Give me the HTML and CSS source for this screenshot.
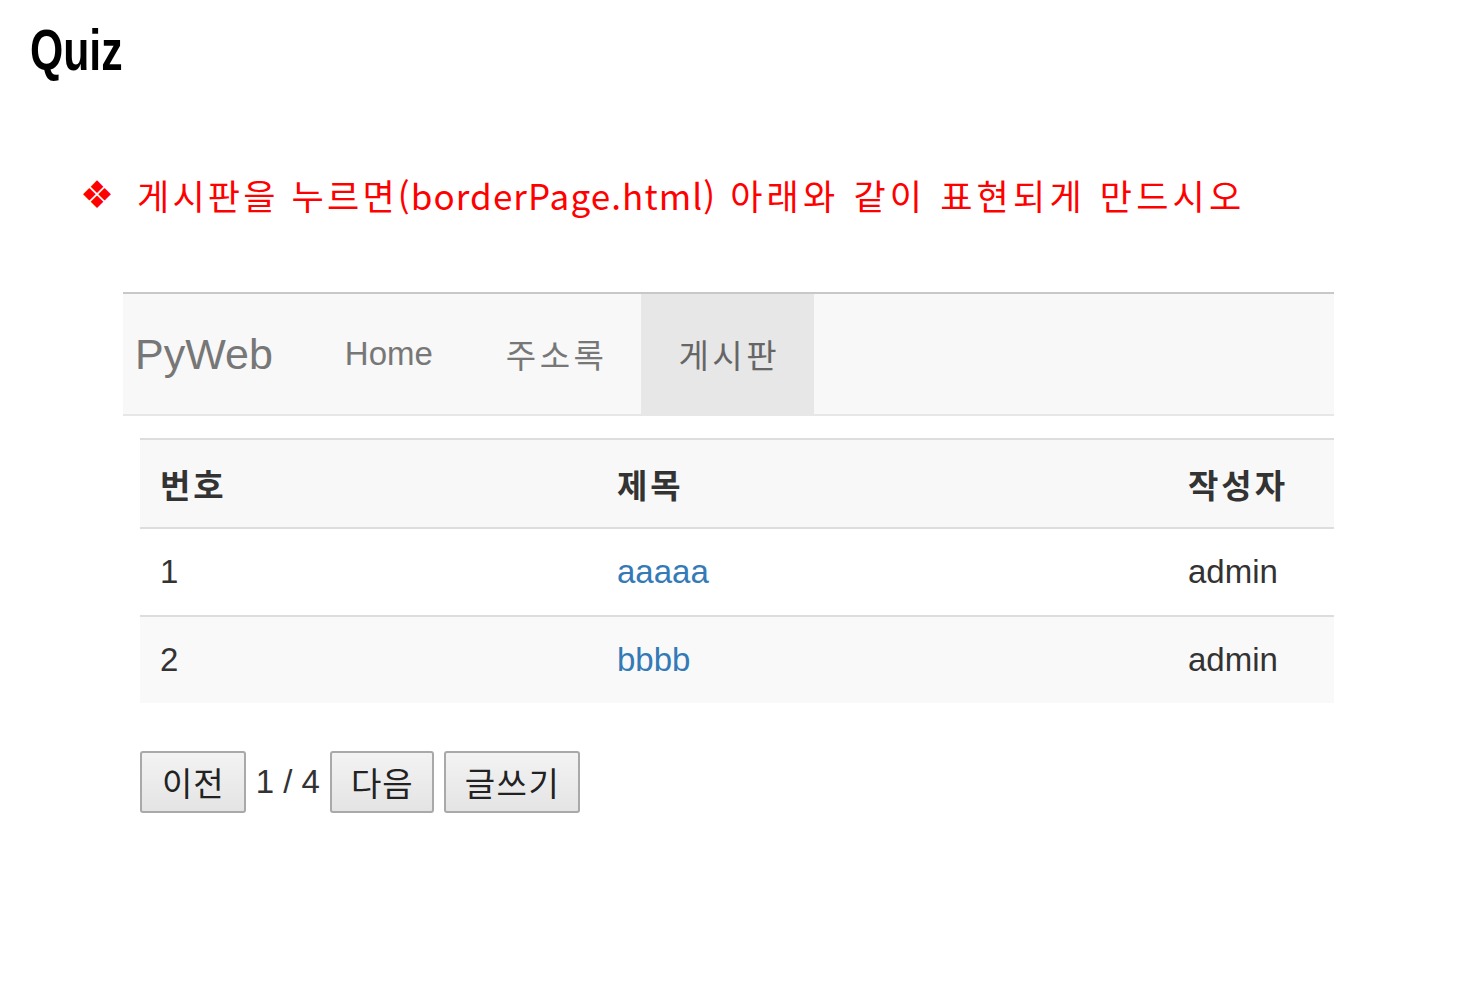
FILE: index.html
```html
<!DOCTYPE html>
<html lang="ko">
<head>
<meta charset="utf-8">
<title>Quiz</title>
<link rel="stylesheet" href="styles.css">
</head>
<body>
<div class="slide">
  <h1 class="title"><span class="title-text">Quiz</span></h1>
  <p class="task"><span class="bullet">❖</span><span class="ko">게시판을 누르면</span><span class="en">(borderPage.html)</span><span class="ko ko-end">&nbsp;아래와 같이 표현되게 만드시오</span></p>
  <div class="shot">
    <nav class="navbar">
      <a class="brand">PyWeb</a>
      <ul class="nav">
        <li><a>Home</a></li>
        <li><a class="ko-nav">주소록</a></li>
        <li class="active"><a class="ko-nav">게시판</a></li>
      </ul>
    </nav>
    <div class="content">
      <table class="board">
        <thead>
          <tr><th class="c1">번호</th><th class="c2">제목</th><th class="c3">작성자</th></tr>
        </thead>
        <tbody>
          <tr><td>1</td><td><a>aaaaa</a></td><td>admin</td></tr>
          <tr class="odd"><td>2</td><td><a>bbbb</a></td><td>admin</td></tr>
        </tbody>
      </table>
      <div class="pager">
        <button class="btn first">이전</button>
        <span class="pages">1 / 4</span>
        <button class="btn">다음</button>
        <button class="btn wide">글쓰기</button>
      </div>
    </div>
  </div>
</div>
</body>
</html>
```
FILE: styles.css
```css
html, body {
  margin: 0;
  padding: 0;
  background: #ffffff;
}
.slide {
  width: 1464px;
  height: 993px;
  box-sizing: border-box;
  padding: 18px 0 0 30px;
  font-family: "Noto Sans CJK KR", "Liberation Sans", sans-serif;
}
.title {
  margin: 0;
  font-family: "Liberation Sans", sans-serif;
  font-weight: bold;
  font-size: 57px;
  line-height: 64px;
  color: #000;
}
.title-text {
  display: inline-block;
  transform: scaleX(0.75);
  transform-origin: left center;
}
.task {
  margin: 88px 0 0 50px;
  display: flex;
  align-items: center;
  color: #ff0000;
  font-size: 35px;
  line-height: 50px;
  white-space: pre;
}
.task .ko {
  letter-spacing: 3.2px;
}
.task .ko-end {
  letter-spacing: 4.2px;
}
.task .en {
  letter-spacing: 1.1px;
}
.bullet {
  font-size: 38px;
  width: 57px;
  font-family: "DejaVu Sans", sans-serif;
}
.shot {
  margin: 72px 0 0 93px;
  width: 1211px;
  font-family: "Liberation Sans", "Noto Sans CJK KR", sans-serif;
}
.navbar {
  display: flex;
  align-items: stretch;
  height: 120px;
  background: #f8f8f8;
  border-top: 2px solid #c8c8c8;
  border-bottom: 2px solid #e7e7e7;
}
.brand {
  display: flex;
  align-items: center;
  padding: 0 36px 0 12px;
  font-size: 43px;
  color: #777;
}
.nav {
  list-style: none;
  display: flex;
  margin: 0;
  padding: 0;
}
.nav li {
  display: flex;
}
.nav a {
  display: flex;
  align-items: center;
  padding: 0 36px;
  font-size: 33px;
  color: #777;
}
.nav a.ko-nav {
  letter-spacing: 3.5px;
  padding: 0 34px 0 37px;
}
.nav li.active a {
  background: #e7e7e7;
  color: #666;
}
.content {
  padding: 22px 0 0 17px;
}
.board {
  width: 1194px;
  border-collapse: collapse;
  font-size: 33px;
  color: #333;
}
.board th {
  text-align: left;
  font-family: "Noto Sans CJK KR", sans-serif;
  font-weight: bold;
  letter-spacing: 3px;
  height: 87px;
  padding: 0 20px;
  background: #f8f8f8;
  border-top: 2px solid #dddddd;
  border-bottom: 2px solid #dddddd;
  vertical-align: middle;
}
.board th.c1 { width: 417px; }
.board th.c2 { width: 531px; }
.board td {
  height: 86px;
  padding: 0 20px;
  border-bottom: 2px solid #dddddd;
  vertical-align: middle;
}
.board tr:last-child td {
  border-bottom: none;
}
.board tr.odd td {
  background: #f9f9f9;
}
.board a {
  color: #337ab7;
}
.pager {
  display: flex;
  align-items: center;
  margin-top: 48px;
  font-size: 33px;
  color: #333;
}
.btn {
  font-family: "Noto Sans CJK KR", sans-serif;
  font-size: 33px;
  letter-spacing: 1px;
  color: #222;
  height: 62px;
  padding: 0 18px 0 19px;
  background: linear-gradient(#f3f3f3, #e4e4e4);
  border: 2px solid #a9a9a9;
  border-radius: 3px;
  margin-right: 10px;
}
.btn.first {
  padding: 0 19px 0 20px;
}
.btn.wide {
  letter-spacing: 1.5px;
}
.pages {
  margin-right: 10px;
}
```
